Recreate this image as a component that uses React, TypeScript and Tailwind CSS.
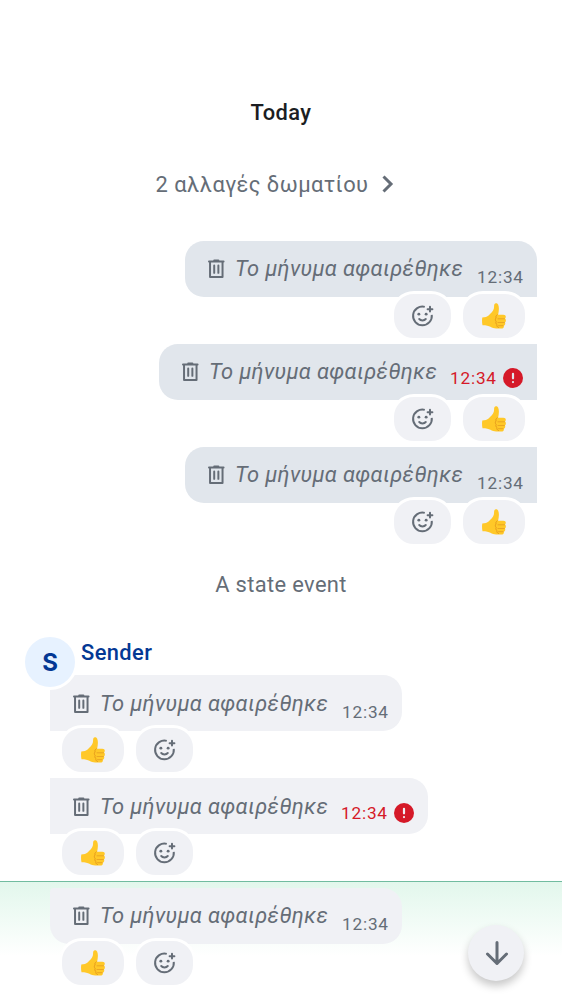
import React from "react";

function Trash() {
  return (
    <svg viewBox="0.2 -0.2 24 24" className="-mt-[1px] h-[25px] w-[25px] shrink-0" fill="none" stroke="#656d77" strokeWidth="1.9" strokeLinecap="round" strokeLinejoin="round">
      <path d="M5 5h14M10 4h4M6 5.5V20h12V5.5" />
      <path d="M10 9v7M14 9v7" />
    </svg>
  );
}

function AddReaction() {
  return (
    <svg viewBox="0 -0.4 24 24" className="-mt-[1px] h-[25px] w-[25px]" fill="none" stroke="#656d77" strokeWidth="1.9" strokeLinecap="round">
      <path d="M14.2 3.3A9 9 0 1 0 20.9 11" strokeLinecap="butt" />
      <path d="M19.2 3.2v4.6M16.9 5.5h4.6" />
      <path d="M8.8 14.9c1.4 1.9 5 1.9 6.4 0" />
      <circle cx="8.5" cy="10.3" r="1.4" fill="#656d77" stroke="none" />
      <circle cx="15.5" cy="10.3" r="1.4" fill="#656d77" stroke="none" />
    </svg>
  );
}

function Thumb() {
  return (
    <svg viewBox="0 0 24 26" className="-ml-[1px] h-[26px] w-[24px]" role="img" aria-label="👍">
      <path
        d="M.3 14.4C3 14.4 5.2 13.6 6.6 12.4c2.3-1.9 4.6-4.5 5.2-6.600.5-1.700.1-3.300.6-4.500.6-1.500 2.900-1.300 3.700.3 1.300 2.700.8 6.900 0 10.200h5.300c1.500 0 2.400.9 2.400 2 0 .8-.3 1.400-.8 1.800.6.5.9 1.100.9 1.800 0 .9-.4 1.600-1 2 .3.5.4 1 .3 1.600-.1.9-.7 1.500-1.400 1.800.1.4.1.8 0 1.200-.3 1-1.100 1.500-2.300 1.500h-5.300c-2.200 0-4-.6-5.800-1.700-1.600-1-4.100-1.600-7.900-1.600-.6-2.500-.6-5.500-.2-7.800Z"
        fill="#ffc828"
      />
      <path d="M15.2 11.8c-1.3.8-1.6 2-1.1 3.1-1 1-1 2.6 0 3.5-.6 1.3-.1 2.5.8 3.1-.3 1.3.2 2.5 1.5 3" fill="none" stroke="#e59a1c" strokeWidth="1" strokeLinecap="round" />
      <path d="M16 15.800h6.500M16 19.500h6.300M16.500 22.700h4.500" fill="none" stroke="#e9a321" strokeWidth="0.9" strokeLinecap="round" />
    </svg>
  );
}

function Reactions({ mine }: { mine?: boolean }) {
  return (
    <div className={`relative z-10 -mt-[6px] flex h-[50px] gap-[6px] ${mine ? "flex-row-reverse pr-[9px]" : "pl-[9px]"}`}>
      <div className="flex h-[50px] w-[68px] items-center justify-center rounded-[23px] border-3 border-white bg-[#f0f1f5]">
        <Thumb />
      </div>
      <div className="flex h-[50px] w-[63px] items-center justify-center rounded-[23px] border-3 border-white bg-[#f0f1f5]">
        <AddReaction />
      </div>
    </div>
  );
}

function Message({ mine, failed, low, shape }: { mine?: boolean; failed?: boolean; low?: boolean; shape: string }) {
  return (
    <div className={`flex h-[103px] flex-col ${mine ? "items-end pr-[25px]" : "items-start pl-[50px]"}`}>
      <div
        className={`flex h-[56px] shrink-0 pl-[19px] ${low ? "pt-[1px]" : ""} ${failed ? "w-[378px]" : "w-[352px]"} ${mine ? "bg-[#e1e6ec]" : "bg-[#f0f1f5]"} ${shape}`}
      >
        <div className="flex h-[56px] items-center">
          <Trash />
          <span className="ml-[6px] w-[228px] text-[21.9px] tracking-[0.35px] whitespace-nowrap text-[#656d77] italic">Το μήνυμα αφαιρέθηκε</span>
        </div>
        <div className={`flex h-[22px] items-center gap-[5px] ${failed ? "mt-[24px] ml-[13px]" : "mt-[26px] ml-[14px]"}`}>
          <span className={`w-[48px] text-[17.2px] tracking-[0.8px] whitespace-nowrap ${failed ? "text-[#d51928]" : "text-[#656d77]"}`}>12:34</span>
          {failed && (
            <svg viewBox="0 0 20 20" className="-mt-[2px] h-[20px] w-[20px]">
              <circle cx="10" cy="10" r="10" fill="#d51928" />
              <path d="M10 5.8v4.5M10 14v.1" stroke={mine ? "#e1e6ec" : "#f0f1f5"} strokeWidth="2.2" strokeLinecap="round" />
            </svg>
          )}
        </div>
      </div>
      <Reactions mine={mine} />
    </div>
  );
}

export default function App() {
  return (
    <div className="relative h-[1000px] w-[562px] overflow-hidden bg-white font-['Roboto','Noto_Sans',sans-serif]">
      <div className="flex h-[241px] flex-col items-center pt-[98px]">
        <div className="h-[30px] text-[21.9px] leading-[30px] font-medium tracking-[0.39px] text-[#1b1d22]">Today</div>
        <div className="mt-[42px] flex h-[30px] items-center pr-[12px]">
          <span className="text-[21.9px] tracking-[0.42px] text-[#656d77]">2 αλλαγές δωματίου</span>
          <svg viewBox="0 0 12 18" className="-mt-[2px] ml-[14px] h-[18px] w-[12px]" fill="none" stroke="#656d77" strokeWidth="3">
            <path d="m1.5 1.5 7.5 7.5-7.5 7.5" />
          </svg>
        </div>
      </div>

      <Message mine shape="rounded-[19px] rounded-br-none" />
      <Message mine failed shape="rounded-l-[19px]" />
      <Message mine shape="rounded-l-[19px]" />

      <div className="mt-[20px] flex h-[30px] items-center justify-center text-[21.9px] tracking-[0.35px] text-[#656d77]">A state event</div>

      <div className="mt-[34px] flex h-[41px] items-start pl-[22px]">
        <div className="relative z-10 flex h-[56px] w-[56px] shrink-0 items-center justify-center rounded-full border-3 border-white bg-[#e7f2ff] pt-[2px] font-['Inter'] text-[24px] font-bold text-[#043894]">S</div>
        <div className="ml-[3px] h-[30px] pt-[4px] text-[21.9px] leading-[30px] font-medium tracking-[0.39px] text-[#043894]">Sender</div>
      </div>

      <Message low shape="rounded-r-[19px]" />
      <Message low failed shape="rounded-r-[19px]" />

      <div className="h-[75px] border-t border-[#71bca0] bg-linear-to-b from-[#e2f7ec] to-white pt-[6px]">
        <Message shape="rounded-[19px] rounded-tl-[4px]" />
      </div>

      <button className="absolute top-[925px] left-[468px] flex h-[56px] w-[56px] items-center justify-center rounded-full bg-[#f0f1f5] shadow-[0_5px_9px_rgba(0,0,0,0.22)]">
        <svg viewBox="0 0 24 24" className="ml-[1px] h-[24px] w-[24px]" fill="none" stroke="#656d77" strokeWidth="3" strokeLinecap="round" strokeLinejoin="round">
          <path d="M12 1.5v21M2.5 13l9.5 9.5 9.5-9.5" />
        </svg>
      </button>
    </div>
  );
}
